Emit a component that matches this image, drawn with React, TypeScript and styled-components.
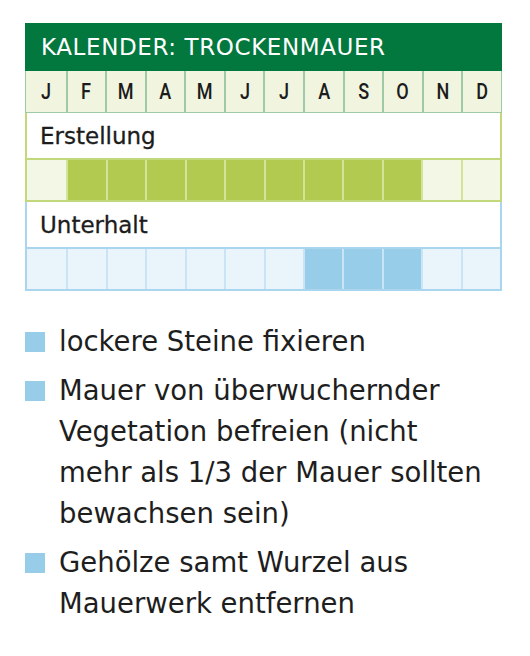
import React from "react";
import styled, { createGlobalStyle } from "styled-components";

const GlobalStyle = createGlobalStyle`
  body {
    margin: 0;
    background: #ffffff;
    font-family: "DejaVu Sans", "Open Sans", sans-serif;
  }
`;

const MONTHS = ["J", "F", "M", "A", "M", "J", "J", "A", "S", "O", "N", "D"];

type Tone = "green" | "blue";

const palette = {
  green: { frame: "#c3d87a", on: "#b3ca50", off: "#f3f7e5", line: "#d3e39a" },
  blue: { frame: "#a9d5ef", on: "#98cdea", off: "#e9f4fb", line: "#c9e4f5" },
};

const sections: { title: string; tone: Tone; active: number[] }[] = [
  { title: "Erstellung", tone: "green", active: [1, 2, 3, 4, 5, 6, 7, 8, 9] },
  { title: "Unterhalt", tone: "blue", active: [7, 8, 9] },
];

const tasks = [
  ["lockere Steine fixieren"],
  [
    "Mauer von überwuchernder",
    "Vegetation befreien (nicht",
    "mehr als 1/3 der Mauer sollten",
    "bewachsen sein)",
  ],
  ["Gehölze samt Wurzel aus", "Mauerwerk entfernen"],
];

export default function App() {
  return (
    <Page>
      <GlobalStyle />
      <Calendar>
        <Header>KALENDER: TROCKENMAUER</Header>
        <MonthRow>
          {MONTHS.map((m, i) => (
            <MonthCell key={i}>
              <MonthLetter>{m}</MonthLetter>
            </MonthCell>
          ))}
        </MonthRow>
        {sections.map((s) => (
          <Section key={s.title} tone={s.tone}>
            <SectionTitle>{s.title}</SectionTitle>
            <Bar tone={s.tone}>
              {MONTHS.map((_, i) => (
                <BarCell key={i} tone={s.tone} active={s.active.includes(i)} />
              ))}
            </Bar>
          </Section>
        ))}
      </Calendar>
      <Legend>
        {tasks.map((lines, i) => (
          <LegendItem key={i}>
            <Swatch />
            <LegendText>
              {lines.map((l, j) => (
                <React.Fragment key={j}>
                  {j > 0 && <br />}
                  {l}
                </React.Fragment>
              ))}
            </LegendText>
          </LegendItem>
        ))}
      </Legend>
    </Page>
  );
}

const Page = styled.div`
  width: 530px;
  height: 656px;
  padding: 23px 0 0 25px;
  box-sizing: border-box;
`;

const Calendar = styled.div`
  width: 477px;
  display: flex;
  flex-direction: column;
`;

const Header = styled.div`
  height: 48px;
  background: #02783e;
  color: #ffffff;
  font-family: "DejaVu Sans", sans-serif;
  font-size: 23px;
  letter-spacing: 0.6px;
  display: flex;
  align-items: center;
  padding-left: 16px;
`;

const MonthRow = styled.div`
  display: grid;
  grid-template-columns: repeat(12, 1fr);
  height: 41px;
  background: #f1f5df;
  border: 1px solid #9fcaa7;
  border-top: none;
`;

const MonthCell = styled.div`
  display: flex;
  align-items: center;
  justify-content: center;
  border-left: 2px solid #9fcaa7;
  &:first-child {
    border-left: none;
  }
`;

const MonthLetter = styled.span`
  display: inline-block;
  font-family: Roboto, "DejaVu Sans", sans-serif;
  font-size: 22px;
  font-weight: 500;
  color: #1c1c1c;
  transform: scaleX(0.82);
`;

const Section = styled.div<{ tone: Tone }>`
  border: 2px solid ${(p) => palette[p.tone].frame};
  border-top: none;
  display: flex;
  flex-direction: column;
`;

const SectionTitle = styled.div`
  height: 45px;
  display: flex;
  align-items: center;
  padding-left: 13px;
  font-family: "DejaVu Sans", sans-serif;
  font-size: 23px;
  color: #1c1c1c;
  background: #ffffff;
  -webkit-text-stroke: 0.3px #1c1c1c;
`;

const Bar = styled.div<{ tone: Tone }>`
  display: grid;
  grid-template-columns: repeat(12, 1fr);
  height: 40px;
  border-top: 2px solid ${(p) => palette[p.tone].frame};
`;

const BarCell = styled.div<{ tone: Tone; active: boolean }>`
  background: ${(p) =>
    p.active ? palette[p.tone].on : palette[p.tone].off};
  border-left: 2px solid ${(p) => palette[p.tone].line};
  &:first-child {
    border-left: none;
  }
`;

const Legend = styled.div`
  margin-top: 30px;
  display: flex;
  flex-direction: column;
  gap: 8px;
`;

const LegendItem = styled.div`
  display: flex;
  align-items: flex-start;
`;

const Swatch = styled.div`
  width: 20px;
  height: 20px;
  background: #98cdea;
  margin-top: 11px;
  margin-right: 14px;
  flex-shrink: 0;
`;

const LegendText = styled.div`
  font-family: "DejaVu Sans", sans-serif;
  font-size: 27.5px;
  line-height: 41px;
  color: #1e1e1e;
`;
